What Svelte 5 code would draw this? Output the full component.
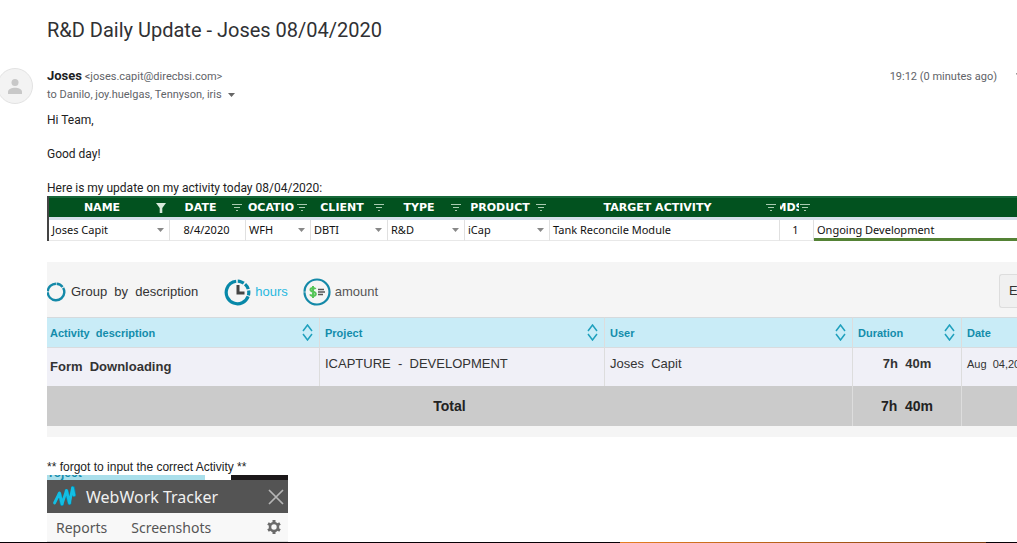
<script>
  const sheetCols = [
    { label: 'NAME', width: 121, filtered: true },
    { label: 'DATE', width: 76 },
    { label: 'OCATIO', width: 65 },
    { label: 'CLIENT', width: 77 },
    { label: 'TYPE', width: 77 },
    { label: 'PRODUCT', width: 85 },
    { label: 'TARGET ACTIVITY', width: 230 },
    { label: 'MDS', width: 34 },
    { label: '', width: null }
  ];
  const sheetRow = [
    { text: 'Joses Capit', menu: true },
    { text: '8/4/2020', align: 'center' },
    { text: 'WFH', menu: true },
    { text: 'DBTI', menu: true },
    { text: 'R&D', menu: true },
    { text: 'iCap', menu: true },
    { text: 'Tank Reconcile Module' },
    { text: '1', align: 'center' },
    { text: 'Ongoing Development', active: true }
  ];
  const reportCols = [
    { label: 'Activity  description', width: 273, sort: true },
    { label: 'Project', width: 285, sort: true },
    { label: 'User', width: 248, sort: true },
    { label: 'Duration', width: 109, sort: true },
    { label: 'Date', width: null }
  ];
</script>

<div class="page">
  <h1>R&amp;D Daily Update - Joses 08/04/2020</h1>

  <header class="sender">
    <svg class="avatar" width="36" height="36" viewBox="0 0 36 36" aria-hidden="true">
      <circle cx="18" cy="18" r="17.5" fill="#f3f3f3" stroke="#e2e2e2" />
      <circle cx="18" cy="14.5" r="3.5" fill="#c8c8c8" />
      <path d="M11 26v-2.200c0-2.600 4-4 7-4s7 1.400 7 4V26z" fill="#c8c8c8" />
    </svg>
    <div class="who">
      <div class="from"><strong>Joses</strong> <span>&lt;joses.capit@direcbsi.com&gt;</span></div>
      <button class="to" type="button">
        to Danilo, joy.huelgas, Tennyson, iris
        <svg width="7" height="4" viewBox="0 0 7 4" aria-hidden="true"><path d="M0 0h7L3.500 4z" fill="#666" /></svg>
      </button>
    </div>
    <time>19:12 (0 minutes ago)</time>
    <svg class="star" width="20" height="20" viewBox="0 0 20 20" aria-hidden="true">
      <path d="M10 1l2.600 6 6.400.6-4.900 4.200 1.500 6.300L10 14.800l-5.600 3.300 1.500-6.300L1 7.600 7.400 7z" fill="none" stroke="#999" />
    </svg>
  </header>

  <main>
    <p>Hi Team,</p>
    <p>Good day!</p>
    <p class="lead">Here is my update on my activity today 08/04/2020:</p>

    <table class="sheet">
      <colgroup>
        {#each sheetCols as c}<col style:width={c.width ? c.width + 'px' : null} />{/each}
      </colgroup>
      <thead>
        <tr>
          {#each sheetCols as c}
            <th>
              {#if c.label}
                <div class="head">
                  <span>{c.label}</span>
                  {#if c.filtered}
                    <svg width="12" height="10" viewBox="0 0 12 10" aria-hidden="true"><path d="M1 0h10L7.300 5v5H4.700V5z" fill="#d8eadc" /></svg>
                  {:else}
                    <svg width="12" height="10" viewBox="0 0 12 10" aria-hidden="true"><path d="M1 1.500h10M3 4.500h6M5 7.500h2" stroke="#a9cbb1" /></svg>
                  {/if}
                </div>
              {/if}
            </th>
          {/each}
        </tr>
      </thead>
      <tbody>
        <tr>
          {#each sheetRow as c}
            <td class:center={c.align} class:active={c.active}>
              <div class="cell">
                <span>{c.text}</span>
                {#if c.menu}
                  <svg width="7" height="4" viewBox="0 0 7 4" aria-hidden="true"><path d="M0 0h7L3.500 4z" fill="#888" /></svg>
                {/if}
              </div>
            </td>
          {/each}
        </tr>
      </tbody>
    </table>

    <section class="report">
      <div class="tools">
        <button class="group" type="button">
          <svg width="20" height="20" viewBox="0 0 20 20" aria-hidden="true">
            <circle cx="9" cy="10" r="8.300" fill="none" stroke="#1489a8" stroke-width="2.400" stroke-dasharray="7 1 30 1 12.150 1" transform="rotate(-86 9 10)" />
          </svg>
          <span>{'Group  by  description'}</span>
        </button>
        <button class="hours" type="button">
          <svg width="27" height="27" viewBox="0 0 27 27" aria-hidden="true">
            <circle cx="13.500" cy="13.500" r="11.300" fill="none" stroke="#0788a8" stroke-width="3.200" stroke-dasharray="47.700 1.500 6.500 1.500 6 1.500 4.800 1.500" transform="rotate(20 13.500 13.500)" />
            <path d="M14 6v8h6.500" fill="none" stroke="#444" stroke-width="3" />
          </svg>
          <span>hours</span>
        </button>
        <button class="amount" type="button">
          <svg width="28" height="28" viewBox="0 0 28 28" aria-hidden="true">
            <circle cx="14" cy="14" r="12.500" fill="none" stroke="#1489a8" stroke-width="2.200" stroke-dasharray="38.800 .5" />
            <path d="M12.500 11.200c-.6-1.500-5-1.700-5 .5 0 2.800 5.300 1.400 5.300 4.300 0 2.500-5 2.300-5.600.2M10 8v12" fill="none" stroke="#55c558" stroke-width="2" />
            <path d="M15 11.500h6M15 14h7M15 16.500h5" stroke="#555" stroke-width="1.300" />
          </svg>
          <span>amount</span>
        </button>
        <button class="export" type="button">E</button>
      </div>

      <table class="hoursheet">
        <colgroup>
          {#each reportCols as c}<col style:width={c.width ? c.width + 'px' : null} />{/each}
        </colgroup>
        <thead>
          <tr>
            {#each reportCols as c}
              <th>
                <div class="cell">
                  <span>{c.label}</span>
                  {#if c.sort}
                    <svg width="11" height="17" viewBox="0 0 11 17" aria-hidden="true">
                      <path d="M1 7l4.500-6L10 7M1 10l4.500 6L10 10" fill="none" stroke="#1fa0bd" stroke-width="1.500" />
                    </svg>
                  {/if}
                </div>
              </th>
            {/each}
          </tr>
        </thead>
        <tbody>
          <tr>
            <td class="activity">{'Form  Downloading'}</td>
            <td>{'ICAPTURE  -  DEVELOPMENT'}</td>
            <td>{'Joses  Capit'}</td>
            <td class="duration">{'7h  40m'}</td>
            <td class="date">{'Aug  04,20'}</td>
          </tr>
        </tbody>
        <tfoot>
          <tr>
            <td colspan="3">Total</td>
            <td>{'7h  40m'}</td>
            <td></td>
          </tr>
        </tfoot>
      </table>
    </section>

    <p class="note">** forgot to input the correct Activity **</p>

    <section class="tracker">
      <div class="strip"><span>Project</span><i></i><b></b></div>
      <div class="bar">
        <svg width="24" height="24" viewBox="0 0 24 24" aria-hidden="true">
          <g fill="none" stroke-linecap="round" stroke-linejoin="round" stroke-width="4">
            <path d="M7.500 9l2.500 10M14.500 6l3 12M21 3l1 7" stroke="#0a86aa" />
            <path d="M2.500 18L7.500 8l2.500 11L14.500 5.500 17.500 18 20.500 3l1.500 7" stroke="#12bfe4" stroke-width="2.800" />
          </g>
        </svg>
        <h2>WebWork Tracker</h2>
        <button type="button" aria-label="Close">
          <svg width="16" height="16" viewBox="0 0 16 16"><path d="M1 1l14 14M15 1L1 15" stroke="#b5b5b5" stroke-width="1.700" /></svg>
        </button>
      </div>
      <nav>
        <a href="#reports">Reports</a>
        <a href="#screenshots">Screenshots</a>
        <button type="button" aria-label="Settings">
          <svg width="14" height="14" viewBox="0 0 14 14">
            <circle cx="7" cy="7" r="4" fill="none" stroke="#6b6b6b" stroke-width="2.600" />
            <path d="M7 0v2.500M7 11.500V14M1 3.500l2.100 1.200M10.900 9.300l2.100 1.200M1 10.500l2.100-1.200M10.900 4.700L13 3.500" stroke="#6b6b6b" stroke-width="3" />
          </svg>
        </button>
      </nav>
    </section>
  </main>

  <div class="edge"></div>
</div>

<style>
  :global(body) { margin: 0; background: #fff; }
  .page {
    min-height: 100vh;
    display: flex;
    flex-direction: column;
    overflow: hidden;
    box-sizing: border-box;
    color: #222;
  }
  button { border: 0; padding: 0; background: none; font: inherit; color: inherit; }
  svg { display: block; flex: none; }
  h1 {
    margin: 16px 0 24px 47px;
    font: 400 20px/28px Roboto, sans-serif;
    color: #303134;
  }
  .sender {
    display: flex;
    font: 11px/18px Roboto, sans-serif;
    color: #5f6368;
    margin-left: -3px;
  }
  .avatar { margin-right: 14px; }
  .who { flex: 1; }
  .from { height: 18px; }
  .from strong { font-size: 13px; line-height: 16px; color: #202124; }
  .to { display: flex; align-items: center; gap: 6px; }
  .star { margin: -2px -18px 0 18px; }
  main { margin-left: 47px; }
  p {
    margin: 0 0 17px;
    font: 12px/17px Roboto, sans-serif;
  }
  main p:first-child { margin-top: 8px; }
  p.lead { margin-bottom: -1px; }
  table { width: 100%; table-layout: fixed; border-collapse: separate; border-spacing: 0; }
  th, td { padding: 0; box-sizing: border-box; white-space: pre; overflow: hidden; text-align: left; }
  .sheet { border-left: 2px solid #444; font: 11px/18px "Noto Sans", sans-serif; color: #111; }
  .sheet th {
    height: 24px;
    background: #02521f;
    border-top: 2px solid #17693a;
    border-bottom: 3px solid #d5dfea;
    color: #fff;
    font: 700 11px/18px "DejaVu Sans", sans-serif;
  }
  .head { display: flex; align-items: center; padding-right: 3px; }
  .head span { flex: 1; min-width: 0; display: flex; justify-content: center; overflow: hidden; }
  .sheet td { height: 21px; border-right: 1px solid #e0e0e0; border-bottom: 1px solid #e8e8e8; }
  .sheet td.active { border-bottom-color: #548235; border-right: 0; box-shadow: inset 0 -2px #548235; }
  .cell { display: flex; align-items: center; justify-content: space-between; padding: 0 5px 0 3px; }
  .center .cell { justify-content: center; }
  .report {
    margin-top: 21px;
    padding-bottom: 11px;
    background: #f5f5f5;
    font: 13px/18px "Liberation Sans", Arial, sans-serif;
    color: #333;
  }
  .tools { display: flex; align-items: center; height: 55px; padding-top: 5px; box-sizing: border-box; }
  .tools button { display: flex; align-items: center; gap: 4px; white-space: pre; }
  .tools .hours { margin-left: 26px; color: #28b8df; }
  .tools .amount { margin-left: 15px; color: #555; }
  .tools .export {
    align-self: flex-start;
    margin: 7px 0 0 auto;
    width: 18px;
    height: 34px;
    padding-left: 9px;
    border: 1px solid #ddd;
    border-right: 0;
    border-radius: 3px 0 0 3px;
    background: #f0f0f0;
    overflow: hidden;
  }
  .hoursheet th {
    height: 31px;
    border-top: 1px solid #d5dadd;
    border-bottom: 1px solid #d8dcdf;
    background: #c9ecf7;
    color: #138cab;
    font: 700 11px/18px "Liberation Sans", Arial, sans-serif;
  }
  .hoursheet th, .hoursheet td { border-right: 1px solid #ddd; }
  .hoursheet th:last-child, .hoursheet td:last-child { border-right: 0; }
  .hoursheet .cell { padding: 0 6px 0 5px; }
  .hoursheet th:first-child .cell { padding-left: 3px; }
  .hoursheet tbody td { height: 38px; padding: 7px 0 0 5px; background: #f0f0f7; vertical-align: top; }
  .hoursheet tbody .activity { padding: 10px 0 0 3px; font-weight: 700; }
  .hoursheet tbody .duration { padding-left: 0; font-weight: 700; text-align: center; }
  .hoursheet tbody .date { font-size: 11px; }
  .hoursheet tfoot td {
    height: 40px;
    background: #cbcbcb;
    text-align: center;
    font-size: 14px;
    font-weight: 700;
    color: #222;
  }
  p.note { margin: 22px 0 0; font: 12px/16px "Liberation Sans", Arial, sans-serif; }
  .tracker { width: 241px; font: 14px/18px "Noto Sans", sans-serif; color: #555; }
  .strip { display: flex; height: 5px; overflow: hidden; align-items: flex-end; background: #fff; }
  .strip span {
    flex: 0 0 158px;
    background: #aadfeb;
    color: #138cab;
    text-indent: -6px;
    font: 700 12px/14px "Liberation Sans", Arial, sans-serif;
  }
  .strip i { flex: 0 0 26px; }
  .strip b { flex: 1; height: 5px; background: #1b1719; }
  .bar { display: flex; align-items: center; gap: 10px; height: 33px; padding: 0 4px 0 5px; background: #545454; }
  .bar h2 { flex: 1; margin: 0; font: 400 16px/22px "Noto Sans", sans-serif; color: #f0f0f0; }
  nav { display: flex; align-items: center; gap: 24px; height: 28px; padding: 0 7px 0 9px; background: #f8f8f8; border-bottom: 1px solid #ddd; }
  nav a { padding-top: 2px; color: inherit; text-decoration: none; }
  nav button { margin-left: auto; }
  .edge {
    height: 1px;
    margin-top: auto;
    background: linear-gradient(90deg, #080006 61%, #e67e22 61%, #7a3c10 97%, #080006 97%);
  }
</style>
